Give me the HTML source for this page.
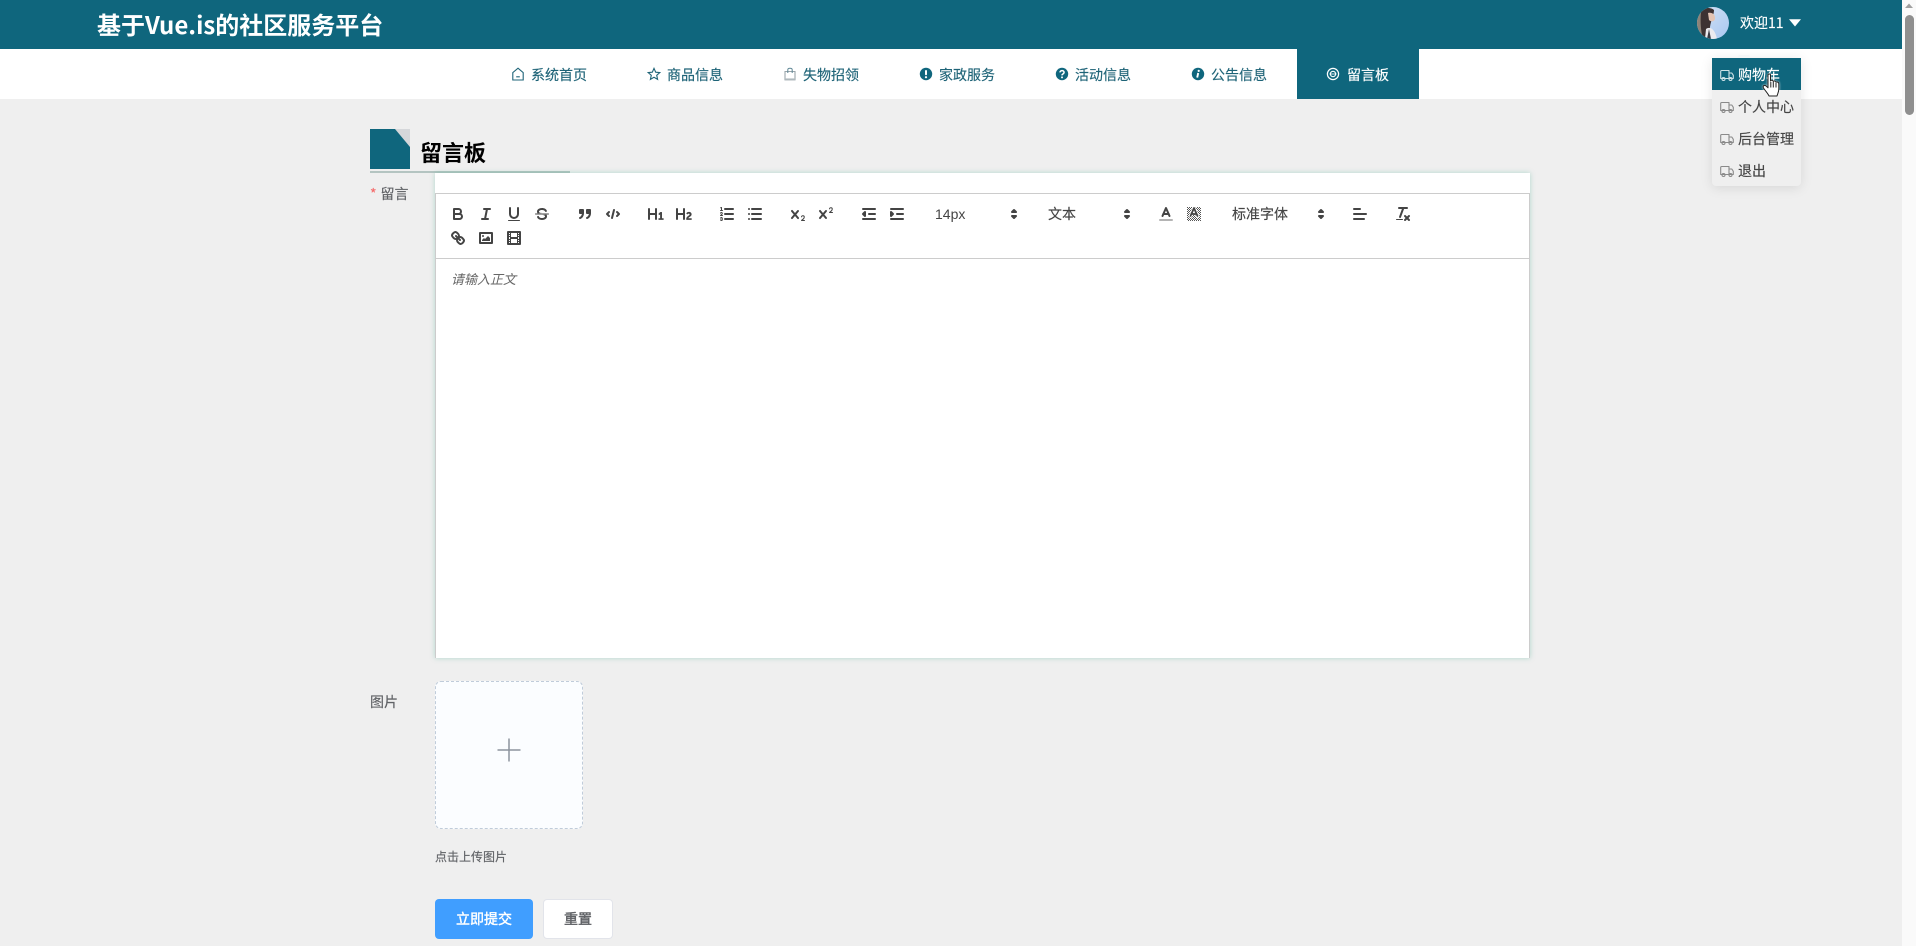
<!DOCTYPE html>
<html lang="zh-CN"><head><meta charset="utf-8"><title>留言板</title>
<style>
*{box-sizing:border-box}
html,body{margin:0;padding:0;width:1916px;height:946px;overflow:hidden;background:#efefef}
body{position:relative;font-family:"Liberation Sans","Noto Sans CJK SC",sans-serif;font-size:14px;color:#606266}
.a{position:absolute;white-space:nowrap}
.cjk{font-family:"Noto Sans CJK SC","Liberation Sans",sans-serif}
#head{left:0;top:0;width:1902px;height:49px;background:#0f667d}
#nav{left:0;top:49px;width:1902px;height:50px;background:#fff}
.t{line-height:20px;height:20px;font-family:"Noto Sans CJK SC","Liberation Sans",sans-serif;-webkit-text-stroke:.15px}
.nt{top:65px;color:#1f6478;font-size:14px}
.b{-webkit-text-stroke:.4px}
svg{display:block;overflow:visible}
.i{position:absolute}
.q{position:absolute;width:18px;height:18px;fill:none;stroke:#444;stroke-width:2;stroke-linecap:round;stroke-linejoin:round}
.q .f{fill:#444;stroke:none}
.q .th{stroke-width:1}
.n{fill:none;stroke:#1f6478;stroke-width:1.1}
.truck{fill:none;stroke:#8a8a8a;stroke-width:1.1;stroke-linejoin:round;position:absolute;width:14px;height:14px}
</style></head><body>

<div class="a" id="head"></div>
<div class="a" id="nav"></div>
<div class="a cjk" style="left:97px;top:6px;height:36px;line-height:36px;font-size:24px;font-weight:700;color:#fff">基于Vue.is的社区服务平台</div>

<!-- nav icons -->
<svg class="i" style="left:511px;top:67px" width="14" height="14" viewBox="0 0 14 14"><path class="n" d="M7 1.200 12.200 5.600V13H1.800V5.600Z"/><path class="n" d="M5.200 9.800H8.800"/></svg>
<div class="a t nt" style="left:531px">系统首页</div>
<svg class="i" style="left:647px;top:67px" width="14" height="14" viewBox="0 0 14 14"><path class="n" d="M7 1.400 8.700 5.200 12.800 5.600 9.700 8.300 10.600 12.400 7 10.300 3.400 12.400 4.300 8.300 1.200 5.600 5.300 5.200Z"/></svg>
<div class="a t nt" style="left:667px">商品信息</div>
<svg class="i" style="left:783px;top:67px" width="14" height="14" viewBox="0 0 14 14"><path d="M2 4.500H12V12.800H2Z" fill="none" stroke="#9aa5ab" stroke-width="1.100"/><path d="M2 11.400H12V12.800H2Z" fill="#b3bcc1"/><path d="M4.800 6V2.800C4.800 .8 9.200 .8 9.200 2.800V6" fill="none" stroke="#5f8795" stroke-width="1"/></svg>
<div class="a t nt" style="left:803px">失物招领</div>
<svg class="i" style="left:919px;top:67px" width="14" height="14" viewBox="0 0 14 14"><circle cx="7" cy="7" r="6.200" fill="#0f667d"/><rect x="6" y="3" width="2" height="5.200" rx="1" fill="#fff"/><circle cx="7" cy="10.200" r="1.100" fill="#fff"/></svg>
<div class="a t nt" style="left:939px">家政服务</div>
<svg class="i" style="left:1055px;top:67px" width="14" height="14" viewBox="0 0 14 14"><circle cx="7" cy="7" r="6.200" fill="#0f667d"/><path d="M5 5.400C5 3.100 9.100 3.100 9.100 5.400 9.100 6.900 7 6.900 7 8.400" fill="none" stroke="#fff" stroke-width="1.500"/><circle cx="7" cy="10.400" r="1" fill="#fff"/></svg>
<div class="a t nt" style="left:1075px">活动信息</div>
<svg class="i" style="left:1191px;top:67px" width="14" height="14" viewBox="0 0 14 14"><circle cx="7" cy="7" r="6.200" fill="#0f667d"/><circle cx="7.700" cy="3.900" r="1.100" fill="#fff"/><path d="M7.200 6 6.200 10.600" stroke="#fff" stroke-width="1.900" fill="none"/></svg>
<div class="a t nt" style="left:1211px">公告信息</div>
<div class="a" style="left:1297px;top:49px;width:122px;height:50px;background:#0f667d"></div>
<svg class="i" style="left:1326px;top:67px" width="14" height="14" viewBox="0 0 14 14"><circle cx="7" cy="7" r="5.600" fill="none" stroke="#fff" stroke-width="1.200"/><circle cx="7" cy="7" r="2.700" fill="none" stroke="#fff" stroke-width="1.100"/><path d="M3.500 7H10.500" stroke="#fff" stroke-width=".8"/></svg>
<div class="a t" style="left:1347px;top:65px;color:#fff;font-size:14px">留言板</div>

<!-- user -->
<svg class="i" style="left:1697px;top:7px" width="32" height="32" viewBox="0 0 32 32"><defs><clipPath id="av"><circle cx="16" cy="16" r="16"/></clipPath><linearGradient id="sky" x1="0" y1="0" x2="1" y2="1"><stop offset="0" stop-color="#d3e2f5"/><stop offset="1" stop-color="#a9c8f0"/></linearGradient></defs><g clip-path="url(#av)"><rect width="32" height="32" fill="url(#sky)"/><rect width="8" height="32" fill="#8d8378"/><path d="M4 5C6 0 14 0 17 3 17 8 14 13 13 20 13 25 12 30 11 32H6C4 25 3 15 4 5Z" fill="#3d3232"/><path d="M11 6C15.500 5 18.500 8 18 12 17 15 14 15 12 13Z" fill="#e3c4b4"/><path d="M8 32 9 22C13 19 18 22 20 32Z" fill="#ecebee"/><path d="M12 22 14 32H10Z" fill="#3a3a42"/></g></svg>
<div class="a t" style="left:1740px;top:13px;color:#fff;font-size:14px">欢迎11</div>
<svg class="i" style="left:1789px;top:19px" width="12" height="8" viewBox="0 0 12 8"><path d="M0 .3H12L6 7.500Z" fill="#fff"/></svg>

<!-- dropdown -->
<div class="a" style="left:1712px;top:58px;width:89px;height:128px;background:#efefef;border-radius:0 0 4px 4px;box-shadow:0 2px 12px rgba(0,0,0,.1)"></div>
<div class="a" style="left:1738px;top:55px;width:12px;height:3px;background:#f4f6f7;border-radius:2px 2px 0 0"></div>
<div class="a" style="left:1712px;top:58px;width:89px;height:32px;background:#0f667d"></div>
<svg class="truck" style="left:1720px;top:68px;stroke:#cfe2e7" viewBox="0 0 14 14"><path d="M1.800 2.500H9V10.500H.7V3.500Q.7 2.500 1.800 2.500ZM9 5H11.800L13.300 7.300V10.500H9"/><circle cx="3.500" cy="11" r="1.500"/><circle cx="10.500" cy="11" r="1.500"/></svg>
<div class="a t" style="left:1738px;top:65px;color:#fff;font-size:14px">购物车</div>
<svg class="truck" style="left:1720px;top:100px" viewBox="0 0 14 14"><path d="M1.800 2.500H9V10.500H.7V3.500Q.7 2.500 1.800 2.500ZM9 5H11.800L13.300 7.300V10.500H9"/><circle cx="3.500" cy="11" r="1.500"/><circle cx="10.500" cy="11" r="1.500"/></svg>
<div class="a t" style="left:1738px;top:97px;color:#444;font-size:14px">个人中心</div>
<svg class="truck" style="left:1720px;top:132px" viewBox="0 0 14 14"><path d="M1.800 2.500H9V10.500H.7V3.500Q.7 2.500 1.800 2.500ZM9 5H11.800L13.300 7.300V10.500H9"/><circle cx="3.500" cy="11" r="1.500"/><circle cx="10.500" cy="11" r="1.500"/></svg>
<div class="a t" style="left:1738px;top:129px;color:#444;font-size:14px">后台管理</div>
<svg class="truck" style="left:1720px;top:164px" viewBox="0 0 14 14"><path d="M1.800 2.500H9V10.500H.7V3.500Q.7 2.500 1.800 2.500ZM9 5H11.800L13.300 7.300V10.500H9"/><circle cx="3.500" cy="11" r="1.500"/><circle cx="10.500" cy="11" r="1.500"/></svg>
<div class="a t" style="left:1738px;top:161px;color:#444;font-size:14px">退出</div>
<!-- hand cursor -->
<svg class="i" style="left:1762px;top:73px;filter:drop-shadow(0 0 1px rgba(255,255,255,.9))" width="19" height="24" viewBox="0 0 19 24"><path d="M6 2C6 .6 8.500 .6 8.500 2V8C9 7 11 7 11.300 8.500 12 7.600 13.800 8 14 9.300 14.800 8.600 16.800 9 16.800 10.800V16C16.800 19 15.500 21 15 23H7C6.200 21 3.800 18.500 1.500 15 .4 13.200 2.200 11.600 3.800 12.800L6 14.800Z" fill="#fff" stroke="#222" stroke-width="1" stroke-linejoin="round"/><path d="M8.800 9V14.500M11.300 9V14.500M14 10V14.500" stroke="#222" stroke-width="1"/></svg>

<!-- scrollbar -->
<div class="a" style="left:1902px;top:0;width:14px;height:946px;background:#fafafa"></div>
<svg class="i" style="left:1902px;top:0" width="14" height="14" viewBox="0 0 14 14"><path d="M3 8 7 3.500 11 8Z" fill="#a0a0a0"/></svg>
<div class="a" style="left:1905px;top:15px;width:9px;height:100px;background:#8f8f8f;border-radius:5px"></div>

<!-- heading -->
<svg class="i" style="left:370px;top:129px" width="40" height="40" viewBox="0 0 40 40"><rect width="40" height="40" fill="#0f667d"/><path d="M25 0H40V18Z" fill="#d5d7da"/></svg>
<div class="a cjk" style="left:420px;top:136px;height:32px;line-height:32px;font-size:22px;font-weight:700;color:#000">留言板</div>
<div class="a" style="left:370px;top:171px;width:200px;height:2px;background:#b4c4c1"></div>

<!-- form label -->
<div class="a t" style="left:370px;top:184px;font-size:14px"><span style="color:#f56c6c">*</span><span style="margin-left:4px">留言</span></div>

<!-- editor -->
<div class="a" style="left:435px;top:173px;width:1095px;height:485px;background:#fff;box-shadow:0 0 5px rgba(60,170,140,.35)"></div>
<div class="a" style="left:435px;top:193px;width:1095px;height:465px;border:1px solid #ccc;border-bottom:none"></div>
<div class="a" style="left:435px;top:258px;width:1095px;height:1px;background:#ccc"></div>
<div class="a" style="left:451px;top:270px;line-height:20px;font-size:13px;font-style:italic;color:#666">请输入正文</div>

<!-- row 1 -->
<svg class="q" style="left:449px;top:205px" viewBox="0 0 18 18"><path d="M5,4H9.500A2.500,2.500,0,0,1,12,6.500v0A2.500,2.500,0,0,1,9.500,9H5V4Z"/><path d="M5,9h5.500A2.500,2.500,0,0,1,13,11.500v0A2.500,2.500,0,0,1,10.500,14H5V9Z"/></svg>
<svg class="q" style="left:477px;top:205px" viewBox="0 0 18 18"><line x1="7" x2="13" y1="4" y2="4"/><line x1="5" x2="11" y1="14" y2="14"/><line x1="8" x2="10" y1="14" y2="4"/></svg>
<svg class="q" style="left:505px;top:205px" viewBox="0 0 18 18"><path d="M5,3V9a4.012,4.012,0,0,0,4,4H9a4.012,4.012,0,0,0,4-4V3"/><rect class="f" height="1" rx=".5" ry=".5" width="12" x="3" y="15"/></svg>
<svg class="q" style="left:533px;top:205px" viewBox="0 0 18 18"><line class="th" x1="15.500" x2="2.500" y1="9" y2="9"/><path class="f" d="M9.007,8C6.542,7.791,6,7.519,6,6.500,6,5.792,7.283,5,9,5c1.571,0,2.765.679,2.969,1.309a1,1,0,0,0,1.900-.617C13.356,4.106,11.354,3,9,3,6.200,3,4,4.538,4,6.500a3.200,3.200,0,0,0,.5,1.843Z"/><path class="f" d="M8.984,10C11.457,10.208,12,10.479,12,11.500c0,.708-1.283,1.500-3,1.500-1.571,0-2.765-.679-2.969-1.309a1,1,0,1,0-1.900.617C4.644,13.894,6.646,15,9,15c2.800,0,5-1.538,5-3.500a3.200,3.200,0,0,0-.5-1.843Z"/></svg>
<svg class="q" style="left:576px;top:205px" viewBox="0 0 18 18"><rect class="f" style="stroke:#444" height="3" width="3" x="4" y="5"/><rect class="f" style="stroke:#444" height="3" width="3" x="11" y="5"/><path class="f" style="stroke:#444" d="M7,8c0,4.031-3,5-3,5"/><path class="f" style="stroke:#444" d="M14,8c0,4.031-3,5-3,5"/></svg>
<svg class="q" style="left:604px;top:205px" viewBox="0 0 18 18"><polyline points="5 7 3 9 5 11"/><polyline points="13 7 15 9 13 11"/><line x1="10" x2="8" y1="5" y2="13"/></svg>
<svg class="q" style="left:647px;top:205px" viewBox="0 0 18 18"><path class="f" d="M10,4V14a1,1,0,0,1-2,0V10H3v4a1,1,0,0,1-2,0V4A1,1,0,0,1,3,4V8H8V4a1,1,0,0,1,2,0Zm6.06787,9.209H14.98975V7.59863a.54085.54085,0,0,0-.605-.60547h-.62744a1.01119,1.01119,0,0,0-.748.29688L11.645,8.56641a.5435.5435,0,0,0-.022.8584l.28613.30762a.53861.53861,0,0,0,.84717.0332l.09912-.08789a1.2137,1.2137,0,0,0,.2417-.35254h.02246s-.01123.30859-.01123.60547V13.209H12.041a.54085.54085,0,0,0-.605.60547v.43945a.54085.54085,0,0,0,.605.60547h4.02686a.54085.54085,0,0,0,.605-.60547v-.43945A.54085.54085,0,0,0,16.06787,13.209Z"/></svg>
<svg class="q" style="left:675px;top:205px" viewBox="0 0 18 18"><path class="f" d="M16.73975,13.81445v.43945a.54085.54085,0,0,1-.605.60547H11.855a.58392.58392,0,0,1-.64893-.60547V14.0127c0-2.90527,3.39941-3.42187,3.39941-4.55469a.77675.77675,0,0,0-.84717-.78125,1.17684,1.17684,0,0,0-.83594.38477c-.2749.26367-.561.374-.85791.13184l-.4292-.34082c-.30811-.24219-.38525-.51758-.1543-.81445a2.97155,2.97155,0,0,1,2.45361-1.17676,2.45393,2.45393,0,0,1,2.68408,2.40918c0,2.45312-3.1792,2.92676-3.27832,3.93848h2.79443A.54085.54085,0,0,1,16.73975,13.81445ZM9,3A.99974.99974,0,0,0,8,4V8H3V4A1,1,0,0,0,1,4V14a1,1,0,0,0,2,0V10H8v4a1,1,0,0,0,2,0V4A.99974.99974,0,0,0,9,3Z"/></svg>
<svg class="q" style="left:718px;top:205px" viewBox="0 0 18 18"><line x1="7" x2="15" y1="4" y2="4"/><line x1="7" x2="15" y1="9" y2="9"/><line x1="7" x2="15" y1="14" y2="14"/><line class="th" x1="2.500" x2="4.500" y1="5.500" y2="5.500"/><path class="f" d="M3.500,6A.5,.5,0,0,1,3,5.500V3.085l-.276.138A.5,.5,0,0,1,2.053,3c-.124-.247-.023-.324.224-.447l1-.5A.5,.5,0,0,1,4,2.500v3A.5,.5,0,0,1,3.500,6Z"/><path class="th" d="M4.500,10.500h-2c0-.234,1.850-1.076,1.850-2.234A.959,.959,0,0,0,2.500,8.156"/><path class="th" d="M2.500,14.846a.959,.959,0,0,0,1.850-.109A.7,.7,0,0,0,3.750,14a.688,.688,0,0,0,.6-.736,.959,.959,0,0,0-1.850-.109"/></svg>
<svg class="q" style="left:746px;top:205px" viewBox="0 0 18 18"><line x1="6" x2="15" y1="4" y2="4"/><line x1="6" x2="15" y1="9" y2="9"/><line x1="6" x2="15" y1="14" y2="14"/><line x1="3" x2="3" y1="4" y2="4"/><line x1="3" x2="3" y1="9" y2="9"/><line x1="3" x2="3" y1="14" y2="14"/></svg>
<svg class="q" style="left:789px;top:205px" viewBox="0 0 18 18"><path class="f" d="M15.500,15H13.861a3.858,3.858,0,0,0,1.914-2.975,1.800,1.800,0,0,0-1.600-1.751A1.921,1.921,0,0,0,12.021,11.700a.50013,.50013,0,1,0,.957.291h0a.914,.914,0,0,1,1.053-.725,.81,.81,0,0,1,.744.762c0,1.076-1.16971,1.86982-1.93971,2.43082A1.45639,1.45639,0,0,0,12,15.500a.5,.5,0,0,0,.5.5h3A.5,.5,0,0,0,15.500,15Z"/><path class="f" d="M9.650,5.241a1,1,0,0,0-1.409.108L6,7.964,3.759,5.349A1,1,0,0,0,2.192,6.59178Q2.21541,6.6213,2.241,6.649L4.684,9.500,2.241,12.350A1,1,0,0,0,3.710,13.70722q.02557-.02768.049-.05722L6,11.036,8.241,13.650a1,1,0,1,0,1.567-1.24277Q9.78459,12.3777,9.759,12.350L7.316,9.500,9.759,6.651A1,1,0,0,0,9.650,5.241Z"/></svg>
<svg class="q" style="left:817px;top:205px" viewBox="0 0 18 18"><path class="f" d="M15.500,7H13.861a4.015,4.015,0,0,0,1.914-2.975,1.800,1.800,0,0,0-1.600-1.751A1.922,1.922,0,0,0,12.021,3.700a.5,.5,0,1,0,.957.291,.917,.917,0,0,1,1.053-.725,.81,.81,0,0,1,.744.762c0,1.077-1.164,1.925-1.934,2.486A1.423,1.423,0,0,0,12,7.500a.5,.5,0,0,0,.5.5h3A.5,.5,0,0,0,15.500,7Z"/><path class="f" d="M9.651,5.241a1,1,0,0,0-1.410.108L6,7.964,3.759,5.349a1,1,0,1,0-1.519,1.300L4.683,9.500,2.241,12.350a1,1,0,1,0,1.519,1.300L6,11.036,8.241,13.650a1,1,0,0,0,1.519-1.300L7.317,9.500,9.759,6.651A1,1,0,0,0,9.651,5.241Z"/></svg>
<svg class="q" style="left:860px;top:205px" viewBox="0 0 18 18"><line x1="3" x2="15" y1="14" y2="14"/><line x1="3" x2="15" y1="4" y2="4"/><line x1="9" x2="15" y1="9" y2="9"/><polyline class="f" style="stroke:#444" points="5 7 5 11 3 9 5 7"/></svg>
<svg class="q" style="left:888px;top:205px" viewBox="0 0 18 18"><line x1="3" x2="15" y1="14" y2="14"/><line x1="3" x2="15" y1="4" y2="4"/><line x1="9" x2="15" y1="9" y2="9"/><polyline class="f" style="stroke:#444" points="3 7 3 11 5 9 3 7"/></svg>

<div class="a" style="left:935px;top:204px;line-height:20px;font-size:14px;color:#444">14px</div>
<svg class="q" style="left:1005px;top:205px" viewBox="0 0 18 18"><polygon class="f" style="stroke:#444" points="7 11 9 13 11 11 7 11"/><polygon class="f" style="stroke:#444" points="7 7 9 5 11 7 7 7"/></svg>
<div class="a t" style="left:1048px;top:204px;font-size:14px;color:#444">文本</div>
<svg class="q" style="left:1118px;top:205px" viewBox="0 0 18 18"><polygon class="f" style="stroke:#444" points="7 11 9 13 11 11 7 11"/><polygon class="f" style="stroke:#444" points="7 7 9 5 11 7 7 7"/></svg>
<svg class="q" style="left:1157px;top:205px" viewBox="0 0 18 18"><line style="opacity:.4" x1="3" x2="15" y1="15" y2="15"/><polyline points="5.500 11 9 3 12.500 11"/><line x1="11.630" x2="6.380" y1="9" y2="9"/></svg>
<svg class="q" style="left:1185px;top:205px" viewBox="0 0 18 18"><defs><pattern id="ck" width="2" height="2" patternUnits="userSpaceOnUse" x="2" y="2"><rect width="1" height="1" fill="#555" stroke="none" style="stroke:none"/><rect x="1" y="1" width="1" height="1" fill="#555" stroke="none" style="stroke:none"/></pattern></defs><rect x="2" y="2" width="14" height="14" fill="url(#ck)" style="stroke:none"/><polyline points="5.500 11 9 3 12.500 11" style="stroke:#fff;stroke-width:3.500"/><polyline points="5.500 11 9 3 12.500 11" style="stroke-width:1.800"/><line x1="11.630" x2="6.380" y1="9" y2="9" style="stroke-width:1.800"/></svg>
<div class="a t" style="left:1232px;top:204px;font-size:14px;color:#444">标准字体</div>
<svg class="q" style="left:1312px;top:205px" viewBox="0 0 18 18"><polygon class="f" style="stroke:#444" points="7 11 9 13 11 11 7 11"/><polygon class="f" style="stroke:#444" points="7 7 9 5 11 7 7 7"/></svg>
<svg class="q" style="left:1351px;top:205px" viewBox="0 0 18 18"><line x1="3" x2="15" y1="9" y2="9"/><line x1="3" x2="13" y1="14" y2="14"/><line x1="3" x2="9" y1="4" y2="4"/></svg>
<svg class="q" style="left:1394px;top:205px" viewBox="0 0 18 18"><line x1="5" x2="13" y1="3" y2="3"/><line x1="6" x2="9.350" y1="12" y2="3"/><line x1="11" x2="15" y1="11" y2="15"/><line x1="15" x2="11" y1="11" y2="15"/><rect class="f" height="1" rx=".5" ry=".5" width="7" x="2" y="14"/></svg>

<!-- row 2 -->
<svg class="q" style="left:449px;top:229px" viewBox="0 0 18 18"><line x1="7" x2="11" y1="7" y2="11"/><path d="M8.900,4.577a3.476,3.476,0,0,1,.36,4.679A3.476,3.476,0,0,1,4.577,8.900C3.185,7.500,2.035,6.400,4.217,4.217S7.500,3.185,8.900,4.577Z"/><path d="M13.423,9.100a3.476,3.476,0,0,0-4.679-.36,3.476,3.476,0,0,0,.36,4.679c1.392,1.392,2.500,2.542,4.679.36S14.815,10.500,13.423,9.100Z"/></svg>
<svg class="q" style="left:477px;top:229px" viewBox="0 0 18 18"><rect height="10" width="12" x="3" y="4"/><circle class="f" cx="6" cy="7" r="1"/><polyline class="f" points="5 12 5 11 7 9 8 10 11 7 13 9 13 12 5 12"/></svg>
<svg class="q" style="left:505px;top:229px" viewBox="0 0 18 18"><rect height="12" width="12" x="3" y="3"/><rect class="f" height="12" width="1" x="5" y="3"/><rect class="f" height="12" width="1" x="12" y="3"/><rect class="f" height="2" width="8" x="5" y="8"/><rect class="f" height="1" width="3" x="3" y="5"/><rect class="f" height="1" width="3" x="3" y="7"/><rect class="f" height="1" width="3" x="3" y="10"/><rect class="f" height="1" width="3" x="3" y="12"/><rect class="f" height="1" width="3" x="12" y="5"/><rect class="f" height="1" width="3" x="12" y="7"/><rect class="f" height="1" width="3" x="12" y="10"/><rect class="f" height="1" width="3" x="12" y="12"/></svg>

<!-- image upload -->
<div class="a t" style="left:370px;top:692px;font-size:14px">图片</div>
<div class="a" style="left:435px;top:681px;width:148px;height:148px;background:#fbfdff;border:1px dashed #c0ccda;border-radius:6px"></div>
<svg class="i" style="left:497px;top:738px;margin-left:-.5px" width="24" height="24" viewBox="0 0 24 24"><path d="M12 .5V23.500M.5 12H23.500" stroke="#8c939d" stroke-width="1.500" fill="none"/></svg>
<div class="a t" style="left:435px;top:847px;font-size:12px">点击上传图片</div>

<!-- buttons -->
<div class="a t b" style="left:435px;top:899px;width:98px;height:40px;line-height:40px;background:#409eff;border-radius:4px;color:#fff;text-align:center;font-size:14px">立即提交</div>
<div class="a t b" style="left:543px;top:899px;width:70px;height:40px;line-height:38px;background:#fff;border:1px solid #e2e4ea;border-radius:4px;color:#606266;text-align:center;font-size:14px">重置</div>
</body></html>
